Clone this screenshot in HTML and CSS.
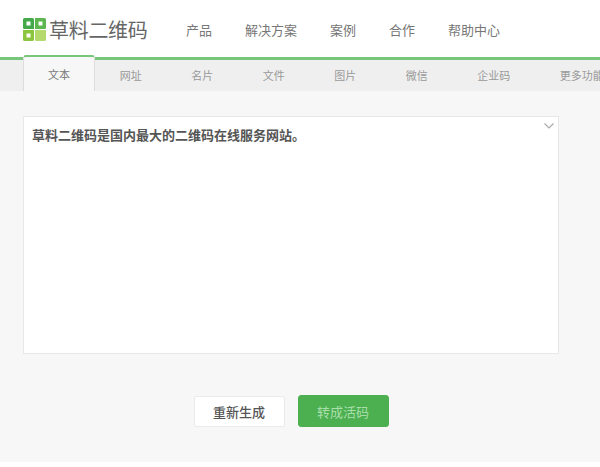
FILE: index.html
```html
<!DOCTYPE html>
<html lang="zh">
<head>
<meta charset="utf-8">
<title>草料二维码</title>
<link rel="stylesheet" href="styles.css">
</head>
<body>
<header class="header">
  <div class="logo">
    <svg class="logo-mark" width="23" height="23" viewBox="0 0 23 23">
      <path fill="#43a94a" fill-rule="evenodd" d="M1.500 0h8a1.500 1.500 0 0 1 1.500 1.500V11H1.500A1.500 1.500 0 0 1 0 9.500v-8A1.500 1.500 0 0 1 1.500 0zM3.500 3.500v4h4v-4z"/>
      <path fill="#5cb74f" fill-rule="evenodd" d="M12 0h9.500A1.500 1.500 0 0 1 23 1.500v8a1.500 1.500 0 0 1-1.500 1.500H12zM15.500 3.500v4h4v-4z"/>
      <path fill="#8cc63f" fill-rule="evenodd" d="M0 12h11v9.500a1.500 1.500 0 0 1-1.500 1.500h-8A1.500 1.500 0 0 1 0 21.500zM3.500 15.500v4h4v-4z"/>
      <path fill="#b4d96c" d="M12 12h11v9.500a1.500 1.500 0 0 1-1.500 1.500h-8a1.500 1.500 0 0 1-1.500-1.500z"/>
    </svg>
    <span class="logo-text">草料二维码</span>
  </div>
  <nav class="nav">
    <a>产品</a><a>解决方案</a><a>案例</a><a>合作</a><a>帮助中心</a>
  </nav>
</header>
<div class="tabs">
  <a class="tab active">文本</a><a class="tab">网址</a><a class="tab">名片</a><a class="tab">文件</a><a class="tab">图片</a><a class="tab">微信</a><a class="tab">企业码</a><a class="tab">更多功能</a>
</div>
<main class="main">
  <div class="editor">
    <p class="editor-text">草料二维码是国内最大的二维码在线服务网站。</p>
    <svg class="chevron" width="10" height="6" viewBox="0 0 10 6"><path d="M.5.5 5 5 9.500.5" fill="none" stroke="#aaa" stroke-width="1.200"/></svg>
  </div>
  <div class="actions">
    <button class="btn">重新生成</button>
    <button class="btn primary">转成活码</button>
  </div>
</main>
</body>
</html>
```
FILE: styles.css
```css
* { box-sizing: border-box; }
html, body { margin: 0; padding: 0; }
body {
  width: 600px;
  height: 467px;
  overflow: hidden;
  background: #fff;
  font-family: "Noto Sans CJK SC", sans-serif;
  color: #666;
}
.header {
  height: 57px;
  display: flex;
  align-items: center;
  padding: 1px 0 0 23px;
}
.logo { display: flex; align-items: center; gap: 3px; width: 163px; margin-top: 1px; }
.logo-mark { display: block; flex: none; }
.logo-text { font-size: 20px; line-height: 24px; letter-spacing: -0.300px; font-weight: 400; color: #666; white-space: nowrap; }
.nav { display: flex; gap: 33px; font-size: 13px; color: #777; }
.tabs {
  height: 34px;
  background: #efefef;
  border-top: 3px solid #78c67c;
  padding-left: 23px;
  display: flex;
  white-space: nowrap;
  font-size: 11px;
  color: #999;
}
.tab { flex: none; padding: 0 24.750px; text-align: center; line-height: 31px; }
.tab.active {
  height: 36px;
  margin-top: -5px;
  padding: 0 24px;
  width: 72px;
  background: #f7f7f7;
  border: 1px solid #ddd;
  border-top: 2px solid #78c67c;
  border-bottom: 0;
  border-radius: 3px 3px 0 0;
  color: #777;
  line-height: 35px;
}
.main {
  height: 371px;
  background: #f7f7f7;
  padding: 25px 41px 0 23px;
}
.editor {
  position: relative;
  height: 238px;
  background: #fff;
  border: 1px solid #e8e8e8;
  padding: 9px 8px;
}
.editor-text { margin: 0; font-size: 13px; line-height: 18px; font-weight: 700; color: #555; }
.chevron { position: absolute; top: 6px; right: 4px; }
.actions { display: flex; justify-content: center; align-items: center; gap: 13px; margin-top: 41px; }
.btn {
  width: 91px;
  height: 31px;
  background: #fff;
  border: 1px solid #eaeaea;
  border-radius: 2px;
  font-family: "Noto Sans CJK SC", sans-serif;
  font-size: 13px;
  font-weight: 500;
  color: #555;
  padding: 0;
}
.btn.primary { height: 32px; background: #4caf50; border-color: #4caf50; color: #a9dfab; border-radius: 3px; font-weight: 400; }
```
